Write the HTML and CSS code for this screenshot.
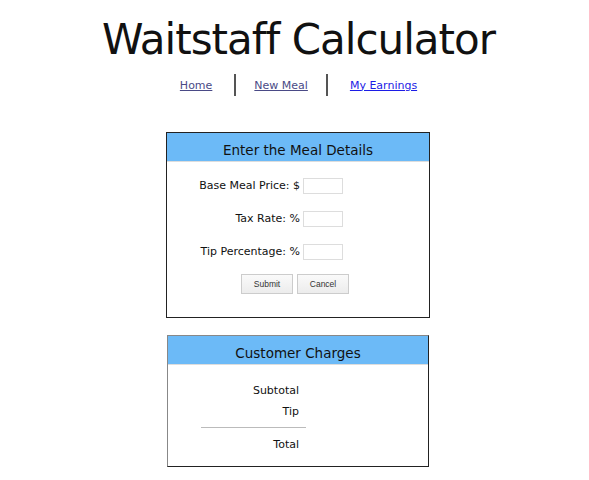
FILE: index.html
```html
<!DOCTYPE html>
<html>
<head>
<meta charset="utf-8">
<link rel="stylesheet" href="styles.css">
</head>
<body>
<h1 class="title">Waitstaff Calculator</h1>
<nav class="nav">
  <a class="nav-link visited" href="#">Home</a>
  <span class="sep sep-a"></span>
  <a class="nav-link visited" href="#">New Meal</a>
  <span class="sep sep-b"></span>
  <a class="nav-link fresh" href="#">My Earnings</a>
</nav>
<section class="panel panel-form">
  <div class="panel-head">Enter the Meal Details</div>
  <div class="form-body">
    <div class="row"><label class="lbl">Base Meal Price: $</label><input class="field" type="text"></div>
    <div class="row"><label class="lbl">Tax Rate: %</label><input class="field" type="text"></div>
    <div class="row"><label class="lbl">Tip Percentage: %</label><input class="field" type="text"></div>
    <div class="buttons">
      <button class="btn">Submit</button>
      <button class="btn">Cancel</button>
    </div>
  </div>
</section>
<section class="panel panel-charges">
  <div class="panel-head">Customer Charges</div>
  <div class="charges-body">
    <div class="charge">Subtotal</div>
    <div class="charge">Tip</div>
    <div class="rule"></div>
    <div class="charge">Total</div>
  </div>
</section>
</body>
</html>
```
FILE: styles.css
```css
body {
  margin: 0;
  font-family: "DejaVu Sans", Verdana, sans-serif;
  color: #111;
  background: #fff;
}
.title {
  margin: 15px 0 0 8px;
  text-align: center;
  font-size: 42px;
  letter-spacing: -1px;
  font-weight: normal;
  line-height: 50px;
  color: #111;
}
.nav {
  display: flex;
  justify-content: center;
  align-items: center;
  margin: 8px 0 0 8px;
  height: 24px;
  font-size: 11px;
}
.nav-link { text-decoration: underline; }
.visited { color: #4a4a86; }
.fresh { color: #1c1ce6; }
.sep {
  width: 2px;
  height: 22px;
  background: #555;
}
.sep-a { margin: 0 18px 0 22px; }
.sep-b { margin: 0 22px 0 18px; }
.panel {
  background: #fff;
  margin-left: 166px;
}
.panel-form {
  width: 262px;
  margin-top: 35px;
  border: 1px solid #222;
  height: 184px;
}
.panel-charges {
  width: 260px;
  margin-top: 17px;
  margin-left: 167px;
  border: 1px solid #888;
  border-right-color: #222;
  border-bottom-color: #222;
  height: 130px;
}
.panel-head {
  background: #6cbaf7;
  height: 28px;
  line-height: 34px;
  text-align: center;
  font-size: 13.5px;
  color: #111;
  border-bottom: 1px solid #ddd;
}
.form-body {
  display: grid;
  grid-template-columns: 133px 40px;
  column-gap: 3px;
  row-gap: 17px;
  padding: 16px 0 0 0;
}
.row { display: contents; }
.lbl {
  text-align: right;
  font-size: 11px;
  line-height: 16px;
  color: #111;
}
.field {
  box-sizing: border-box;
  width: 40px;
  height: 16px;
  margin: 0;
  border: 1px solid #ddd;
  padding: 0;
}
.buttons {
  grid-column: 1 / 3;
  display: flex;
  gap: 4px;
  padding-left: 74px;
  margin-top: -3px;
}
.btn {
  flex: 0 0 52px;
  width: 52px;
  height: 20px;
  padding: 0;
  font-family: "Liberation Sans", Arial, sans-serif;
  font-size: 8.5px;
  color: #333;
  background: linear-gradient(#fafafa, #ececec);
  border: 1px solid #ccc;
}
.charges-body {
  display: flex;
  flex-direction: column;
  align-items: flex-start;
  padding-top: 15px;
}
.charge {
  width: 131px;
  text-align: right;
  font-size: 11px;
  line-height: 21px;
  color: #111;
}
.rule {
  width: 105px;
  height: 1px;
  background: #bbb;
  margin: 5px 0 6px 33px;
}
```
